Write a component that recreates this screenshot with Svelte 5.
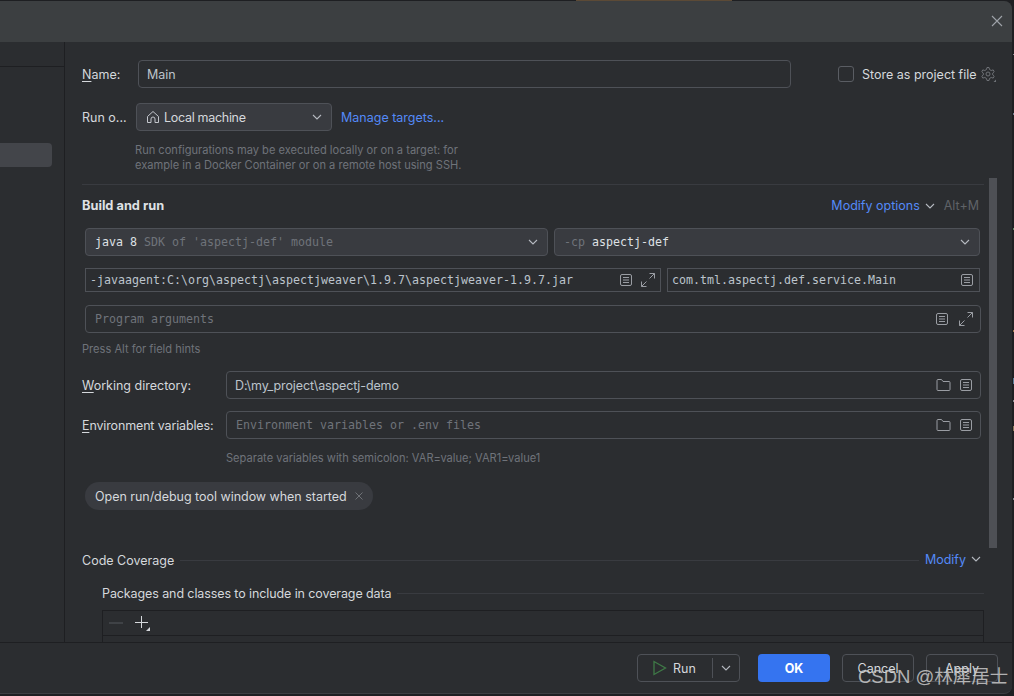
<script>
  const wm = [
    { t: 'maolintian 2025-01-14', c: 'w1' },
    { t: 'maolintian 2025-01-14', c: 'w2' },
    { t: 'maolintian 2025-01-14', c: 'w3' },
    { t: 'maolintian 2025-01-14', c: 'w4' },
    { t: 'maolintian 2025-01-14', c: 'w5' },
    { t: 'maolintian 2025-01-14', c: 'w6' }
  ];
  const ticks = [
    { y: 54, h: 1, color: '#8a8d93' },
    { y: 113, h: 2, color: '#6f7d8c' },
    { y: 228, h: 2, color: '#6a8a6a' },
    { y: 330, h: 2, color: '#a07a50' },
    { y: 378, h: 6, color: '#5a7d99' },
    { y: 400, h: 2, color: '#8a8d93' },
    { y: 426, h: 5, color: '#8a7a5a' },
    { y: 498, h: 2, color: '#8a8d93' }
  ];
</script>

{#snippet doc()}
  <svg class="ic" width="14" height="14" viewBox="0 0 14 14" fill="none" stroke="#9a9da3" stroke-width="1">
    <rect x="1.5" y="1.5" width="11" height="11" rx="1.5" />
    <path d="M4 4.5h6M4 7h6M4 9.5h6" />
  </svg>
{/snippet}
{#snippet expand()}
  <svg class="ic" width="16" height="16" viewBox="0 0 16 16" fill="none" stroke="#9a9da3" stroke-width="1">
    <path d="M9.5 1.5h5v5M14.5 1.5l-5 5M1.5 9.5v5h5M1.5 14.5l5-5" />
  </svg>
{/snippet}
{#snippet folder()}
  <svg class="ic" width="15" height="14" viewBox="0 0 15 14" fill="none" stroke="#9a9da3" stroke-width="1">
    <path d="M1 2.5a1 1 0 0 1 1-1h3.5l1.5 2h6a1 1 0 0 1 1 1v7a1 1 0 0 1-1 1H2a1 1 0 0 1-1-1z" />
  </svg>
{/snippet}
{#snippet chev(cls = '')}
  <svg class="chev {cls}" width="10" height="6" viewBox="0 0 10 6" fill="none" stroke="#b4b8bf" stroke-width="1.1">
    <path d="M1 1l4 4 4-4" />
  </svg>
{/snippet}

<div class="screen">
  <div class="topstrip"><i class="o1"></i></div>
  <div class="dialog">
    <header class="head">
      <svg width="12" height="12" viewBox="0 0 12 12" fill="none" stroke="#9ea2a8" stroke-width="1.1"><path d="M1 1l10 10M11 1L1 11" /></svg>
    </header>

    <div class="main">
      <aside class="side">
        <div class="side-top"></div>
        <div class="side-sel"></div>
      </aside>

      <section class="form">
        <div class="upper">
          <div class="row name-row">
            <span class="lab name-lab"><u>N</u>ame:</span>
            <div class="field name-field">Main</div>
            <span class="check"></span>
            <span class="store">Store as project file</span>
            <svg class="gear" width="17" height="17" viewBox="0 0 17 17" fill="none" stroke="#6f7277" stroke-width="1">
              <path d="M7 1.5h2l.5 2 1.7 1 2-.6 1 1.8-1.5 1.4v1.8l1.5 1.4-1 1.8-2-.6-1.7 1-.5 2H7l-.5-2-1.7-1-2 .6-1-1.8 1.5-1.4V7.1L1.800 5.700l1-1.800 2 .6 1.700-1z" />
              <circle cx="8" cy="8" r="2" />
              <path d="M16 13.500v2.500h-2.500z" fill="#6f7277" stroke="none" />
            </svg>
          </div>
          <div class="row run-row">
            <span class="lab run-lab">Run o...</span>
            <div class="combo local">
              <svg width="14" height="14" viewBox="0 0 14 14" fill="none" stroke="#c3c6cc" stroke-width="1"><path d="M1.500 6.500L7 1.500l5.500 5v6h-3.500v-3.500a2 2 0 0 0-4 0v3.500H1.500z" /></svg>
              <span class="grow">Local machine</span>
              {@render chev()}
            </div>
            <span class="link manage">Manage targets...</span>
          </div>
          <p class="hint runhint">Run configurations may be executed locally or on a target: for<br />example in a Docker Container or on a remote host using SSH.</p>
        </div>

        <div class="rule"></div>

        <div class="scroll-area">
          <div class="scrollbar"></div>
          <div class="build-head">
            <strong>Build and run</strong>
            <span class="grow"></span>
            <span class="link">Modify options</span>
            {@render chev('blue')}
            <span class="kbd">Alt+M</span>
          </div>

          <div class="grid-two first">
            <div class="combo mono jdk">
              <span class="bright">java 8</span><span class="dim">&nbsp;SDK of 'aspectj-def' module</span>
              <span class="grow"></span>
              {@render chev()}
            </div>
            <div class="combo mono cp">
              <span class="dim">-cp</span><span class="bright">&nbsp;aspectj-def</span>
              <span class="grow"></span>
              {@render chev()}
            </div>
          </div>

          <div class="grid-two second">
            <div class="sq mono vm">
              <span class="grow">-javaagent:C:\org\aspectj\aspectjweaver\1.9.7\aspectjweaver-1.9.7.jar</span>
              {@render doc()}{@render expand()}
            </div>
            <div class="sq mono mainc">
              <span class="grow">com.tml.aspectj.def.service.Main</span>
              {@render doc()}
            </div>
          </div>

          <div class="field mono args">
            <span class="grow ph">Program arguments</span>
            {@render doc()}{@render expand()}
          </div>

          <p class="hint alt">Press Alt for field hints</p>

          <div class="row wd-row">
            <span class="lab"><u>W</u>orking directory:</span>
            <div class="field wide">
              <span class="grow tight">D:\my_project\aspectj-demo</span>
              {@render folder()}{@render doc()}
            </div>
          </div>
          <div class="row env-row">
            <span class="lab env-lab"><u>E</u>nvironment variables:</span>
            <div class="field wide mono envf">
              <span class="grow ph">Environment variables or .env files</span>
              {@render folder()}{@render doc()}
            </div>
          </div>
          <p class="hint sep">Separate variables with semicolon: VAR=value; VAR1=value1</p>

          <div class="chip">
            <span>Open run/debug tool window when started</span>
            <svg width="8" height="8" viewBox="0 0 8 8" fill="none" stroke="#6f7277" stroke-width="1"><path d="M.5.5l7 7M7.500.5l-7 7" /></svg>
          </div>

          <div class="sect cov">
            <span class="title">Code Coverage</span>
            <span class="line"></span>
            <span class="link modify">Modify</span>
            {@render chev('blue')}
          </div>
          <div class="sect pk">
            <span class="title">Packages and classes to include in coverage data</span>
            <span class="line"></span>
          </div>
          <div class="table">
            <div class="tools">
              <svg width="14" height="2" viewBox="0 0 14 2"><path d="M0 1h14" stroke="#55585d" /></svg>
              <svg width="16" height="16" viewBox="0 0 16 16"><path d="M7.500 1v12M1 7.500h13" stroke="#d5d8dc" fill="none" /><path d="M16 12v4h-4z" fill="#d5d8dc" /></svg>
            </div>
          </div>
        </div>
      </section>
    </div>

    <footer class="foot">
      <div class="btn runbtn">
        <svg width="14" height="16" viewBox="0 0 14 16" fill="none" stroke="#3f7a47" stroke-width="1.3"><path d="M1 1.500v13l11.500-6.500z" /></svg>
        <span class="runlab">Run</span>
        <i class="divider"></i>
        {@render chev()}
      </div>
      <div class="btn ok">OK</div>
      <div class="btn plain">Cancel</div>
      <div class="btn plain">Apply</div>
    </footer>
  </div>
  {#each ticks as t}
    <i class="tick" style="top: {t.y}px; height: {t.h}px; background: {t.color}"></i>
  {/each}
  <div class="wms">
    {#each wm as w}<span class="wm {w.c}">{w.t}</span>{/each}
  </div>
  <span class="mark">CSDN @林犀居士</span>
</div>

<style>
  :global(body) { margin: 0; background: #1e1f22; }
  .screen {
    position: relative;
    width: 1014px;
    height: 696px;
    overflow: hidden;
    background: #1e1f22;
    font: 12.500px/17px Inter, "Noto Sans", sans-serif;
    color: #d5d8dc;
  }
  .topstrip { height: 1px; position: relative; }
  .o1 { position: absolute; left: 576px; top: 0; width: 156px; height: 1px; background: #5c4a36; }
  .tick { position: absolute; left: 1013px; width: 1px; }
  .dialog {
    width: 1012px;
    height: 693px;
    display: flex;
    flex-direction: column;
    background: #2b2d30;
    border-radius: 0 8px 8px 0;
    overflow: hidden;
    border-bottom: 1px solid #3c3e42;
    box-sizing: border-box;
  }
  .head {
    flex: 0 0 41px;
    background: #3c3f41;
    display: flex;
    align-items: center;
    justify-content: flex-end;
    padding: 0 9px 1px 0;
    box-sizing: border-box;
  }
  .main { flex: 1; min-height: 0; display: flex; border-bottom: 1px solid #1e1f22; }
  .side { width: 64px; flex: none; border-right: 1px solid #1e1f22; }
  .side-top { height: 24px; border-bottom: 1px solid #1e1f22; }
  .side-sel { margin-top: 76px; width: 52px; height: 24px; background: #43454a; border-radius: 0 4px 4px 0; }

  .form { flex: 1; min-width: 0; position: relative; overflow: hidden; padding-left: 17px; }
  .upper { padding-top: 18px; }
  .row { display: flex; align-items: center; }
  .grow { flex: 1; min-width: 0; }
  .tight { letter-spacing: -0.12px; }
  .lab { color: #d5d8dc; white-space: nowrap; }
  .lab u { text-underline-offset: 2px; }
  .env-lab { letter-spacing: -0.14px; }
  .name-row { height: 28px; }
  .name-lab { width: 56px; flex: none; }
  .field {
    box-sizing: border-box;
    height: 28px;
    border: 1px solid #4e5157;
    border-radius: 4px;
    display: flex;
    align-items: center;
    padding: 0 8px 0 8px;
    color: #bcc4cc;
  }
  .name-field { width: 653px; flex: none; }
  .check {
    width: 16px; height: 16px; box-sizing: border-box;
    border: 1px solid #5a5d63; border-radius: 3px;
    margin-left: 47px; flex: none;
  }
  .store { margin-left: 8px; white-space: nowrap; }
  .gear { margin-left: 3px; flex: none; }
  .run-row { height: 28px; margin-top: 15px; }
  .run-lab { width: 54px; flex: none; }
  .combo {
    box-sizing: border-box;
    height: 28px;
    background: #393b40;
    border: 1px solid #4e5157;
    border-radius: 4px;
    display: flex;
    align-items: center;
    padding: 0 9px;
  }
  .local { width: 196px; gap: 4px; padding: 0 9px; flex: none; letter-spacing: -0.3px; }
  .chev { flex: none; }
  .link { color: #548af7; white-space: nowrap; }
  .manage { margin-left: 9px; }
  .hint { margin: 0; color: #6f737a; font-size: 11.100px; line-height: 15px; }
  .runhint { margin: 12px 0 0 53px; }
  .rule { height: 1px; margin: 11px 28px 0 0; background: #393b40; }

  .scroll-area { position: relative; padding-right: 30px; height: 458px; }
  .scrollbar { position: absolute; right: 15px; top: -7px; width: 8px; height: 370px; background: #4e5055; }
  .build-head { display: flex; align-items: center; height: 41px; box-sizing: border-box; margin-bottom: 2px; }
  .build-head strong { font-weight: 700; font-size: 12.800px; color: #dfe1e5; }
  .build-head .chev { margin-left: 5px; }
  .kbd { margin-left: 9px; margin-right: 3px; color: #5f6267; }

  .mono { font-family: "DejaVu Sans Mono", "Liberation Mono", monospace; font-size: 11.630px; }
  .bright { color: #dfe1e5; white-space: pre; }
  .dim { color: #6f737a; white-space: pre; }
  .ph { color: #6f737a; }
  .grid-two { display: flex; margin-left: 3px; }
  .first { gap: 6px; }
  .jdk { width: 463px; flex: none; }
  .cp { width: 426px; flex: none; }
  .second { margin-top: 12px; gap: 6px; }
  .sq {
    box-sizing: border-box;
    height: 24px;
    border: 1px solid #4e5157;
    display: flex;
    align-items: center;
    color: #bcc4cc;
    white-space: nowrap;
  }
  .vm { width: 576px; flex: none; padding: 0 4px; gap: 7px; }
  .mainc { width: 313px; flex: none; padding: 0 5px 0 4px; }
  .args {
    margin: 13px 0 0 3px;
    width: 896px;
    gap: 9px;
    padding: 0 6px 0 9px;
  }
  .alt { margin: 9px 0 0; }
  .wd-row { margin-top: 14px; height: 28px; }
  .env-row { margin-top: 12px; height: 28px; }
  .wd-row .lab, .env-row .lab { width: 144px; flex: none; }
  .wide { width: 755px; flex: none; gap: 8px; padding-right: 7px; }
  .envf { padding-left: 9px; }
  .sep { margin: 12px 0 0 144px; }
  .chip {
    display: inline-flex;
    align-items: center;
    gap: 8px;
    height: 28px;
    margin: 16px 0 0 3px;
    padding: 0 10px;
    background: #393b40;
    border-radius: 14px;
    letter-spacing: -0.03px;
  }
  .sect { display: flex; align-items: center; }
  .cov { margin: 40px 1px 0 0; height: 20px; }
  .cov .line, .pk .line { flex: 1; height: 1px; background: #393b40; margin-left: 6px; }
  .cov .line { margin-right: 6px; }
  .cov .chev { margin-left: 5px; position: relative; top: -1px; }
  .modify { position: relative; top: -1px; }
  .pk { margin: 13px -2px 0 20px; height: 20px; letter-spacing: -0.1px; }
  .table {
    margin: 7px -2px 0 20px;
    height: 60px;
    border: 1px solid #1e1f22;
    box-sizing: border-box;
  }
  .tools {
    height: 24px;
    border-bottom: 1px solid #1e1f22;
    display: flex;
    align-items: center;
    gap: 11px;
    padding: 0 6px;
  }

  .foot {
    flex: 0 0 50px;
    display: flex;
    align-items: center;
    justify-content: flex-end;
    padding-right: 14px;
    gap: 12px;
    box-sizing: border-box;
  }
  .btn {
    box-sizing: border-box;
    height: 28px;
    width: 72px;
    border-radius: 4px;
    display: flex;
    align-items: center;
    justify-content: center;
  }
  .plain { border: 1px solid #4e5157; color: #d5d8dc; }
  .ok { background: #3574f0; color: #fff; font-weight: 700; }
  .runbtn {
    width: 103px;
    border: 1px solid #4e5157;
    justify-content: flex-start;
    padding-left: 15px;
    margin-right: 6px;
  }
  .runlab { margin-left: 6px; width: 39px; }
  .divider { width: 1px; height: 20px; background: #4e5157; margin-right: 8px; }

  .mark {
    position: absolute;
    left: 858px;
    top: 665px;
    color: #c9c9c9;
    font: 18.500px/24px "Liberation Sans", "Noto Sans CJK SC", sans-serif;
    white-space: nowrap;
    opacity: 0.85;
  }

  .wms { position: absolute; inset: 0; pointer-events: none; }
  .wm { position: absolute; color: rgba(255, 255, 255, 0.018); font: 16px/16px "DejaVu Sans Mono", monospace; white-space: nowrap; }
  .w1 { left: 52px; top: 128px; }
  .w2 { left: 355px; top: 125px; }
  .w3 { left: 657px; top: 123px; }
  .w4 { left: 664px; top: 406px; }
  .w5 { left: 664px; top: 547px; }
  .w6 { left: 58px; top: 569px; }
</style>
